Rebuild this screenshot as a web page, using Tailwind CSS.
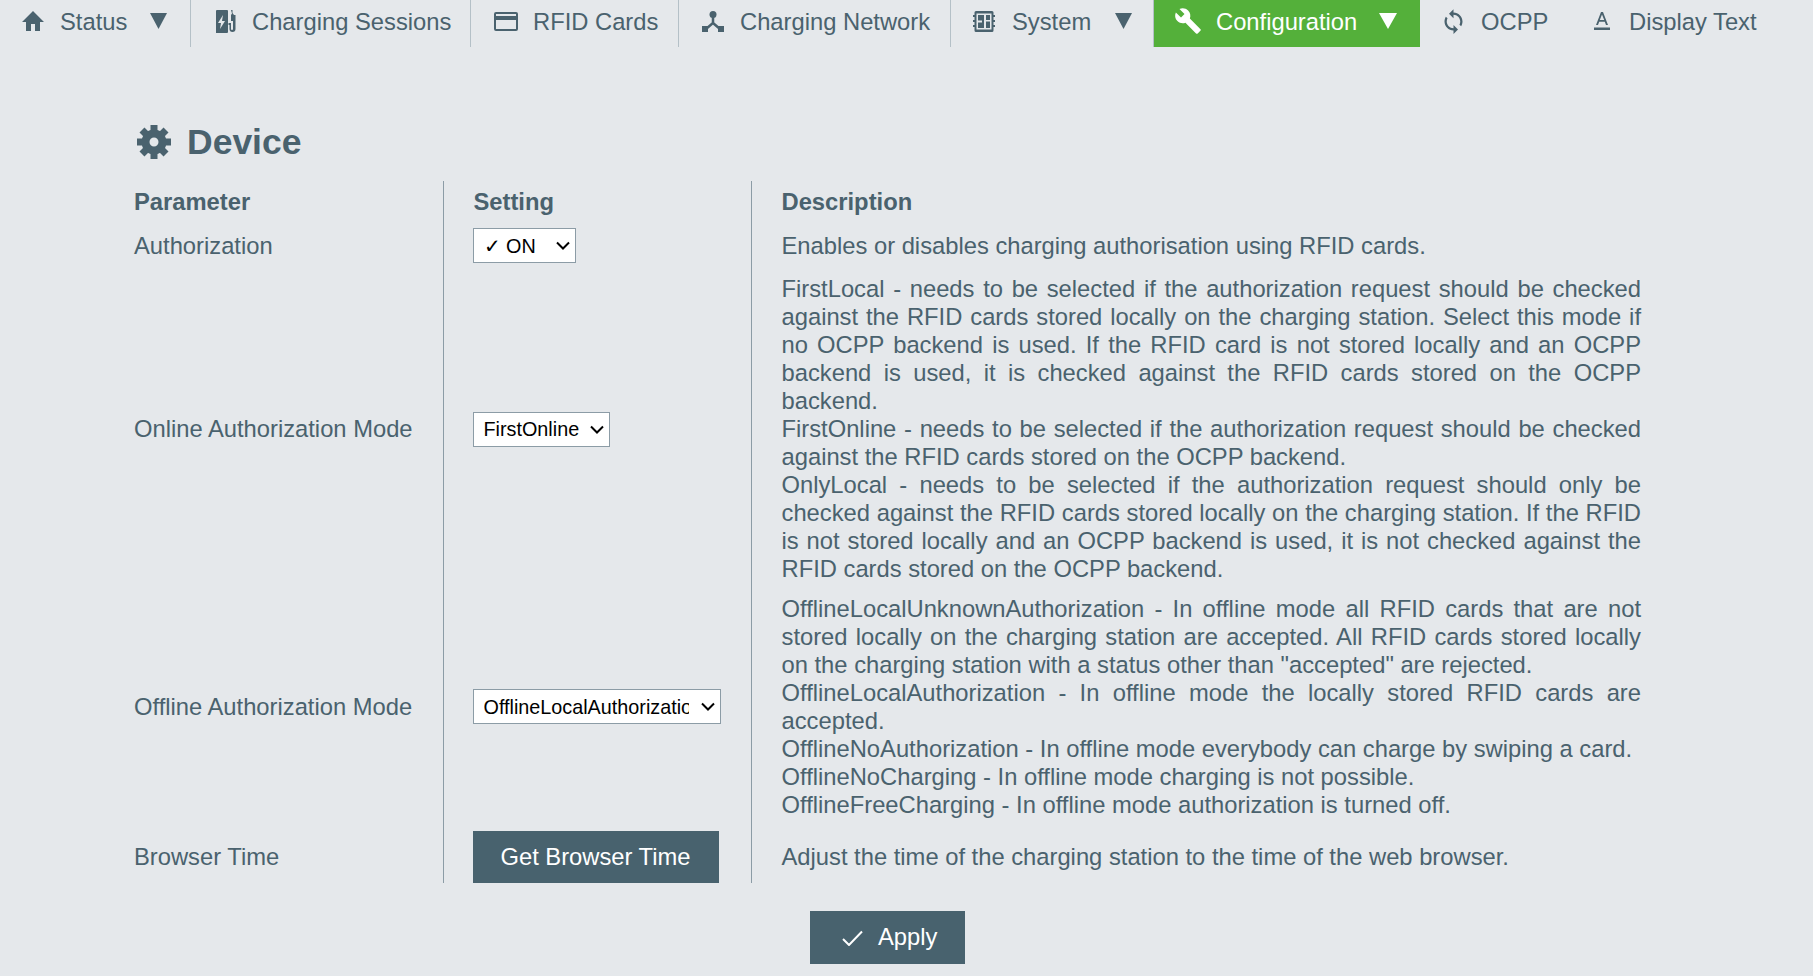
<!DOCTYPE html>
<html lang="en">
<head>
  <meta charset="UTF-8" />
  <title>Configuration - Device</title>
  <script src="https://cdn.jsdelivr.net/npm/@tailwindcss/browser@4"></script>
</head>
<body class="bg-[#e5e8eb] text-[#4a626e] font-['Liberation_Sans',Arial,sans-serif] text-[23.75px] leading-[28px] h-[976px] overflow-hidden">

  <nav class="flex h-[47px] items-stretch">
    <a class="flex items-center w-[191px] pl-[22px] pb-[5px] border-r border-[#b4c0c7]">
      <svg class="w-[22px] h-[20px] fill-[#4a626e]" viewBox="0 0 22 20"><path d="M9 20v-7h4v7h5v-9h4L11 0 0 11h4v9z"/></svg>
      <span class="ml-[16px] mt-[2px]">Status</span>
      <svg class="ml-[23px] w-[17px] h-[16px] fill-[#4a626e]" viewBox="0 0 17 16"><path d="M0 0h17L8.500 16z"/></svg>
    </a>
    <a class="flex items-center w-[280px] pl-[25px] pb-[5px] border-r border-[#b4c0c7]">
      <svg class="w-[20px] h-[23px] fill-[#4a626e]" viewBox="0 0 20 23"><path fill-rule="evenodd" d="M1 0h10a1 1 0 0 1 1 1v21a1 1 0 0 1-1 1H0V1a1 1 0 0 1 1-1zm6 5-5 8h3l-1 6 5-8H6z"/><path d="M15 0h1.500v3l1.500 2h1.500v14a3 3 0 0 1-6 0v-4h-1v-2h2.500v6a1 1 0 0 0 2 0V11h-2V5l1-1.500z"/></svg>
      <span class="ml-[16px] mt-[2px]">Charging Sessions</span>
    </a>
    <a class="flex items-center w-[208px] pl-[23px] pb-[5px] border-r border-[#b4c0c7]">
      <svg class="w-[24px] h-[19px] fill-[#4a626e]" viewBox="0 0 24 19"><path fill-rule="evenodd" d="M2 0h20a2 2 0 0 1 2 2v15a2 2 0 0 1-2 2H2a2 2 0 0 1-2-2V2a2 2 0 0 1 2-2zm0 2v2h20V2zm0 6v9h20V8z"/></svg>
      <span class="ml-[15px] mt-[2px]">RFID Cards</span>
    </a>
    <a class="flex items-center w-[272px] pl-[23px] pb-[5px] border-r border-[#b4c0c7]">
      <svg class="w-[22px] h-[21px]" viewBox="0 0 22 21"><g fill="#4a626e"><circle cx="11" cy="3.500" r="3.500"/><rect x="0" y="15" width="6" height="6"/><rect x="16" y="15" width="6" height="6"/></g><path d="M11 5v7l-7 6M11 12l7 6" fill="none" stroke="#4a626e" stroke-width="2.500"/></svg>
      <span class="ml-[16px] mt-[2px]">Charging Network</span>
    </a>
    <a class="flex items-center w-[203px] pl-[22px] pb-[5px] border-r border-[#b4c0c7]">
      <svg class="w-[22px] h-[21px] fill-[#4a626e]" viewBox="0 0 22 21"><path fill-rule="evenodd" d="M3 0h16a1.500 1.500 0 0 1 1.500 1.500V4H22v2h-1.500v3H22v2h-1.500v3H22v2h-1.500v3.500A1.500 1.500 0 0 1 19 21H3a1.500 1.500 0 0 1-1.500-1.500V16H0v-2h1.500v-3H0V9h1.500V6H0V4h1.500V1.500A1.500 1.500 0 0 1 3 0zm.5 2.500v16h15v-16zM5 4h6v13H5V11.500h4v-2H5zm8 0h4v5h-4zm0 6.500h4V17h-4z"/></svg>
      <span class="ml-[17px] mt-[2px]">System</span>
      <svg class="ml-[24px] w-[17px] h-[16px] fill-[#4a626e]" viewBox="0 0 17 16"><path d="M0 0h17L8.500 16z"/></svg>
    </a>
    <a class="flex items-center w-[266px] pl-[20px] pb-[5px] bg-[#54b03a] text-white">
      <svg class="w-[28px] h-[28px] fill-white" viewBox="0 0 24 24"><path d="M22.700 19 13.600 9.900c.9-2.300.4-5-1.500-6.900-2-2-5-2.400-7.400-1.300L9 6 6 9 1.600 4.700C.4 7.100.9 10.100 2.900 12.100c1.900 1.900 4.600 2.400 6.900 1.500l9.100 9.100c.4.4 1 .4 1.400 0l2.300-2.300c.5-.4.5-1.100.1-1.400z"/></svg>
      <span class="ml-[14px] mt-[2px]">Configuration</span>
      <svg class="ml-[22px] w-[18px] h-[16px] fill-white" viewBox="0 0 18 16"><path d="M0 0h18L9 16z"/></svg>
    </a>
    <a class="flex items-center w-[153px] pl-[20px] pb-[5px]">
      <svg class="w-[27px] h-[27px] fill-[#4a626e]" viewBox="0 0 24 24"><path d="M12 4V1L8 5l4 4V6c3.300 0 6 2.700 6 6 0 1-.3 2-.7 2.800l1.500 1.500C19.500 15 20 13.600 20 12c0-4.400-3.600-8-8-8zm0 14c-3.300 0-6-2.700-6-6 0-1 .3-2 .7-2.800L5.200 7.700C4.500 9 4 10.400 4 12c0 4.400 3.600 8 8 8v3l4-4-4-4z"/></svg>
      <span class="ml-[14px] mt-[2px]">OCPP</span>
    </a>
    <a class="flex items-center pl-[21px] pb-[5px]">
      <svg class="w-[16px] h-[18px] fill-[#4a626e]" viewBox="0 0 16 18"><path fill-rule="evenodd" d="M7 0h2l5 13h-2l-1.200-3.300H5.200L4 13H2zm1 2.500-2.200 5.400h4.400zM0 15.500h16V18H0z"/></svg>
      <span class="ml-[19px] mt-[2px]">Display Text</span>
    </a>
  </nav>

  <main class="ml-[134px] w-[1507px]">
    <h1 class="flex items-center h-[134px] pt-[55px] text-[35.5px] font-bold">
      <svg class="w-[34px] h-[34px] ml-[3px]" viewBox="-17 -17 34 34">
        <circle r="8.500" fill="none" stroke="#4a626e" stroke-width="8"/>
        <g fill="#4a626e">
          <rect x="-3.500" y="-17" width="7" height="7"/>
          <rect x="-3.500" y="-17" width="7" height="7" transform="rotate(45)"/>
          <rect x="-3.500" y="-17" width="7" height="7" transform="rotate(90)"/>
          <rect x="-3.500" y="-17" width="7" height="7" transform="rotate(135)"/>
          <rect x="-3.500" y="-17" width="7" height="7" transform="rotate(180)"/>
          <rect x="-3.500" y="-17" width="7" height="7" transform="rotate(225)"/>
          <rect x="-3.500" y="-17" width="7" height="7" transform="rotate(270)"/>
          <rect x="-3.500" y="-17" width="7" height="7" transform="rotate(315)"/>
        </g>
      </svg>
      <span class="ml-[16px]">Device</span>
    </h1>

    <table class="w-full table-fixed">
      <colgroup>
        <col class="w-[309px]" />
        <col class="w-[308px]" />
        <col />
      </colgroup>
      <tr class="font-bold h-[41px]">
        <td>Parameter</td>
        <td class="border-l border-[#8c9ca6] pl-[30px]">Setting</td>
        <td class="border-l border-[#8c9ca6] pl-[30px]">Description</td>
      </tr>
      <tr>
        <td>Authorization</td>
        <td class="border-l border-[#8c9ca6] pl-[29px] py-[6px]">
          <div class="relative w-[103px] h-[35px]">
            <select class="appearance-none block w-full h-full bg-white border border-[#8c9ca6] text-black text-[19.8px] pl-[10px] pr-[24px]">
              <option>✓ ON</option>
            </select>
            <svg class="absolute right-[6px] top-[13px] w-[14px] h-[9px] pointer-events-none" viewBox="0 0 14 9"><path d="M1 1.500l6 6 6-6" fill="none" stroke="#000" stroke-width="2"/></svg>
          </div>
        </td>
        <td class="border-l border-[#8c9ca6] pl-[30px]">Enables or disables charging authorisation using RFID cards.</td>
      </tr>
      <tr>
        <td>Online Authorization Mode</td>
        <td class="border-l border-[#8c9ca6] pl-[29px] py-[6px]">
          <div class="relative w-[137px] h-[35px]">
            <select class="appearance-none block w-full h-full bg-white border border-[#8c9ca6] text-black text-[19.8px] pl-[10px] pr-[24px]">
              <option>FirstOnline</option>
            </select>
            <svg class="absolute right-[6px] top-[13px] w-[14px] h-[9px] pointer-events-none" viewBox="0 0 14 9"><path d="M1 1.500l6 6 6-6" fill="none" stroke="#000" stroke-width="2"/></svg>
          </div>
        </td>
        <td class="border-l border-[#8c9ca6] pl-[30px] py-[6px] text-justify">
          FirstLocal - needs to be selected if the authorization request should be checked against the RFID cards stored locally on the charging station. Select this mode if no OCPP backend is used. If the RFID card is not stored locally and an OCPP backend is used, it is checked against the RFID cards stored on the OCPP backend.<br />
          FirstOnline - needs to be selected if the authorization request should be checked against the RFID cards stored on the OCPP backend.<br />
          OnlyLocal - needs to be selected if the authorization request should only be checked against the RFID cards stored locally on the charging station. If the RFID is not stored locally and an OCPP backend is used, it is not checked against the RFID cards stored on the OCPP backend.
        </td>
      </tr>
      <tr>
        <td>Offline Authorization Mode</td>
        <td class="border-l border-[#8c9ca6] pl-[29px] py-[6px]">
          <div class="relative w-[248px] h-[35px] mb-[1px]">
            <select class="appearance-none block w-full h-full bg-white border border-[#8c9ca6] text-black text-[19.8px] pl-[10px] pr-[31px]">
              <option>OfflineLocalAuthorization</option>
            </select>
            <svg class="absolute right-[6px] top-[13px] w-[14px] h-[9px] pointer-events-none" viewBox="0 0 14 9"><path d="M1 1.500l6 6 6-6" fill="none" stroke="#000" stroke-width="2"/></svg>
          </div>
        </td>
        <td class="border-l border-[#8c9ca6] pl-[30px] py-[6px] text-justify">
          OfflineLocalUnknownAuthorization - In offline mode all RFID cards that are not stored locally on the charging station are accepted. All RFID cards stored locally on the charging station with a status other than "accepted" are rejected.<br />
          OfflineLocalAuthorization - In offline mode the locally stored RFID cards are accepted.<br />
          OfflineNoAuthorization - In offline mode everybody can charge by swiping a card.<br />
          OfflineNoCharging - In offline mode charging is not possible.<br />
          OfflineFreeCharging - In offline mode authorization is turned off.
        </td>
      </tr>
      <tr>
        <td class="pt-[6px]">Browser Time</td>
        <td class="border-l border-[#8c9ca6] pl-[29px] pt-[6px]">
          <button class="block w-[246px] h-[52px] bg-[#48626e] text-white text-center">Get Browser Time</button>
        </td>
        <td class="border-l border-[#8c9ca6] pl-[30px] pt-[6px]">Adjust the time of the charging station to the time of the web browser.</td>
      </tr>
    </table>

    <div class="flex justify-center mt-[28px]">
      <button class="flex items-center w-[155px] h-[53px] pl-[32px] bg-[#48626e] text-white">
        <svg class="w-[21px] h-[16px]" viewBox="0 0 21 16"><path d="M1 9l6 6L20 1.500" fill="none" stroke="#fff" stroke-width="2"/></svg>
        <span class="ml-[15px] mb-[2px]">Apply</span>
      </button>
    </div>
  </main>
</body>
</html>
